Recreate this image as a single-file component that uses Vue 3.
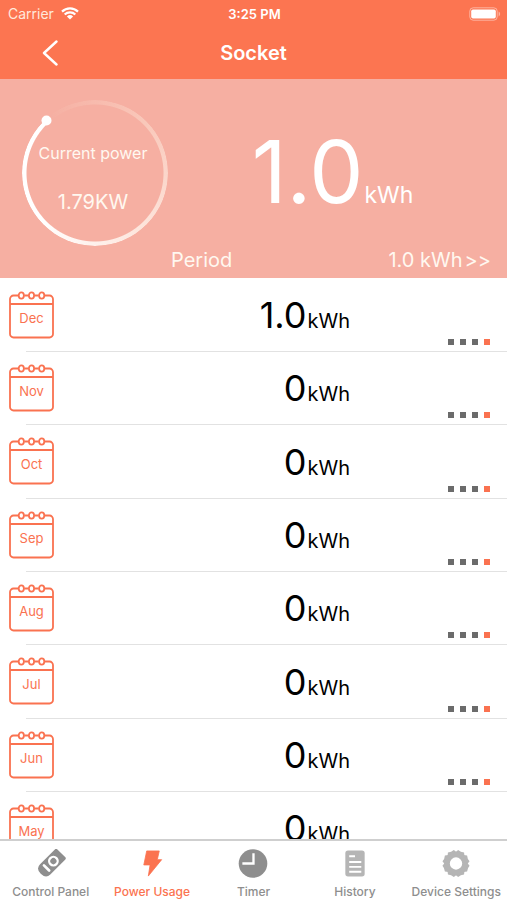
<script setup>
const months = [
  { name: 'Dec', value: '1.0' },
  { name: 'Nov', value: '0' },
  { name: 'Oct', value: '0' },
  { name: 'Sep', value: '0' },
  { name: 'Aug', value: '0' },
  { name: 'Jul', value: '0' },
  { name: 'Jun', value: '0' },
  { name: 'May', value: '0' },
]

const tabs = [
  { id: 'panel', label: 'Control Panel' },
  { id: 'usage', label: 'Power Usage' },
  { id: 'timer', label: 'Timer' },
  { id: 'history', label: 'History' },
  { id: 'settings', label: 'Device Settings' },
]
const active = 'usage'
</script>

<template>
  <div class="screen">
    <header class="top">
      <div class="status">
        <span class="carrier">
          Carrier
          <svg class="wifi" viewBox="0 0 18 13" aria-hidden="true">
            <path d="M1 4.6a11.5 11.5 0 0 1 16 0M3.7 7.5a7.6 7.6 0 0 1 10.6 0" fill="none" stroke="currentColor" stroke-width="2.2" />
            <path d="M9 12.6 5.9 9.5a4.5 4.5 0 0 1 6.2 0z" fill="currentColor" />
          </svg>
        </span>
        <span class="clock">3:25 PM</span>
        <span class="power">
          <svg class="battery" viewBox="0 0 32 14" aria-hidden="true">
            <rect x=".8" y=".8" width="27.4" height="12.4" rx="3.4" fill="none" stroke="#fff" stroke-opacity=".45" />
            <rect x="2.2" y="2.4" width="24.6" height="9.2" rx="1.8" fill="#fff" />
            <path d="M29.6 4.6c2 .7 2 4.1 0 4.8z" fill="#fff" fill-opacity=".45" />
          </svg>
        </span>
      </div>
      <nav class="bar">
        <button class="back" type="button" aria-label="Back">
          <svg viewBox="0 0 16 26" aria-hidden="true">
            <path d="M14.5 1.5 2 13l12.5 11.5" fill="none" stroke="currentColor" stroke-width="2.4" stroke-linecap="round" stroke-linejoin="round" />
          </svg>
        </button>
        <h1>Socket</h1>
      </nav>
    </header>

    <section class="hero">
      <div class="overview">
        <div class="gauge">
          <span class="track"></span>
          <svg class="knob" viewBox="0 0 146 146" aria-hidden="true"><circle cx="24.5" cy="20.5" r="5" fill="#fff" /></svg>
          <span class="gauge-label">Current power</span>
          <span class="gauge-value">1.79KW</span>
        </div>
        <p class="total"><span class="total-number">1.0</span><span class="total-unit">kWh</span></p>
      </div>
      <div class="period">
        <span>Period</span>
        <a href="#period">1.0 kWh<span class="more">&gt;&gt;</span></a>
      </div>
    </section>

    <ul class="months">
      <li v-for="m in months" :key="m.name" class="month">
        <span class="calendar">
          <svg viewBox="0 0 45 48" fill="none" stroke="currentColor" stroke-width="1.8" aria-hidden="true">
            <path d="M9.3 4.5H4.5A3.5 3.5 0 0 0 1 8v35a3.5 3.5 0 0 0 3.5 3.5h36A3.5 3.5 0 0 0 44 43V8a3.5 3.5 0 0 0-3.5-3.5h-4.8M15.3 4.5h4.2M25.5 4.5h4.2M1 13h43" />
            <ellipse cx="12.3" cy="4.5" rx="2.6" ry="3.2" />
            <ellipse cx="22.5" cy="4.5" rx="2.6" ry="3.2" />
            <ellipse cx="32.7" cy="4.5" rx="2.6" ry="3.2" />
          </svg>
          <span class="month-name">{{ m.name }}</span>
        </span>
        <div class="detail">
          <span class="reading"><span class="number">{{ m.value }}</span><span class="unit">kWh</span></span>
          <span class="dots"><i></i><i></i><i></i><i></i></span>
        </div>
      </li>
    </ul>

    <nav class="tabs">
      <a v-for="t in tabs" :key="t.id" :href="'#' + t.id" class="tab" :class="[t.id, { active: t.id === active }]">
        <svg v-if="t.id === 'panel'" viewBox="0 0 30 30" aria-hidden="true">
          <g transform="rotate(45 15 15)">
            <path d="M9 0h12q1.500 0 1.500 1.500V23.500q0 6.500-7.500 6.500t-7.500-6.500V1.500Q7.500 0 9 0z" fill="currentColor" />
            <circle cx="15" cy="11.500" r="4.400" fill="none" stroke="#fff" stroke-width="2.400" />
            <path d="M11.200 21.500h7.600" stroke="#fff" stroke-width="2.800" stroke-linecap="round" />
          </g>
        </svg>
        <svg v-else-if="t.id === 'usage'" viewBox="0 0 30 30" aria-hidden="true">
          <path d="M9.5 2h13l-2 9H25L11.200 28l1.800-11.500H6.500z" fill="currentColor" stroke="currentColor" stroke-width=".8" stroke-linejoin="round" />
        </svg>
        <svg v-else-if="t.id === 'timer'" viewBox="0 0 30 30" aria-hidden="true">
          <circle cx="15" cy="15" r="14.8" fill="currentColor" />
          <path d="M15.5 4.500V15H4" fill="none" stroke="#fff" stroke-width="2.400" />
        </svg>
        <svg v-else-if="t.id === 'history'" viewBox="0 0 30 30" aria-hidden="true">
          <rect x="5" y="1.5" width="20" height="27" rx="2.8" fill="currentColor" />
          <path d="M9 7.500h6M9 13.500h12.500M9 18.500h12.500M9 23.500h12.500" stroke="#fff" stroke-width="2" />
        </svg>
        <svg v-else viewBox="0 0 30 30" aria-hidden="true">
          <g fill="currentColor">
            <path v-for="n in 8" :key="n" d="M9 6 11.700 1.200q3.300 1.200 6.600 0L21 6z" :transform="`rotate(${n * 45 + 22.5} 15 15)`" />
          </g>
          <circle cx="15" cy="15" r="8.800" fill="none" stroke="currentColor" stroke-width="4.800" />
        </svg>
        <span>{{ t.label }}</span>
      </a>
    </nav>
  </div>
</template>

<style>
body {
  margin: 0;
  background: #fff;
}
</style>

<style scoped>
.screen {
  display: flex;
  flex-direction: column;
  height: 100vh;
  overflow: hidden;
  background: #fff;
  color: #000;
  font-family: Inter, "Liberation Sans", sans-serif;
}

a {
  color: inherit;
  text-decoration: none;
}

.top {
  flex: none;
  background: #fc7551;
  color: #fff;
}

.status {
  display: grid;
  grid-template-columns: 1fr auto 1fr;
  align-items: center;
  height: 27px;
  padding: 0 6px 0 8px;
  font-size: 13px;
}

.carrier {
  display: flex;
  align-items: center;
  gap: 7px;
  font-size: 14px;
  color: #ffe9dc;
}

.wifi {
  width: 18px;
  height: 13px;
  color: #fff;
}

.clock {
  font-weight: 600;
}

.power {
  display: flex;
  justify-content: flex-end;
}

.battery {
  width: 32px;
  height: 14px;
}

.bar {
  display: grid;
  grid-template-columns: 1fr auto 1fr;
  align-items: center;
  height: 52px;
  padding: 0 24px;
  box-sizing: border-box;
}

.back {
  display: flex;
  justify-self: start;
  padding: 8px 18px;
  border: 0;
  background: none;
  color: #fff;
}

.back svg {
  width: 16px;
  height: 26px;
}

h1 {
  margin: 0;
  font-size: 20px;
  line-height: 28px;
  font-weight: 600;
}

.hero {
  flex: none;
  padding-top: 21px;
  background: #f6afa2;
  color: #fff8f0;
}

.overview {
  display: flex;
  padding-left: 22px;
}

.gauge {
  position: relative;
  display: flex;
  flex-direction: column;
  align-items: center;
  gap: 25px;
  box-sizing: border-box;
  width: 146px;
  height: 146px;
  padding: 41px 4px 0 0;
  line-height: 24px;
}

.track {
  position: absolute;
  inset: 0;
  border-radius: 50%;
  background: conic-gradient(from 318deg, rgba(255, 240, 225, 0), rgba(255, 240, 225, 0.4) 25%, rgba(255, 246, 238, 0.75) 50%, #fff 75%);
  mask: radial-gradient(closest-side, transparent 68px, #000 69px);
}

.knob {
  position: absolute;
  inset: 0;
}

.gauge-label {
  font-size: 16px;
  white-space: nowrap;
}

.gauge-value {
  font-size: 20px;
}

.total {
  flex: 1;
  display: flex;
  justify-content: center;
  align-items: baseline;
  gap: 1px;
  margin: 0;
  padding: 20px 10px 0 0;
  color: #fff;
}

.total-number {
  font-size: 86px;
  line-height: 104px;
}

.total-unit {
  font-size: 23px;
  line-height: 28px;
}

.period {
  display: flex;
  justify-content: space-between;
  padding: 0 16px 4px 171px;
  font-size: 20px;
  line-height: 28px;
}

.more {
  margin-left: 2px;
}

.months {
  flex: 1;
  min-height: 0;
  display: grid;
  grid-auto-rows: 73px 73px 74px;
  margin: 0;
  padding: 1px 0 0;
  list-style: none;
  overflow-y: auto;
  scrollbar-width: none;
}

.month {
  display: grid;
  grid-template-columns: 26px 1fr;
}

.calendar {
  grid-area: 1 / 1;
  display: grid;
  width: 45px;
  height: 48px;
  margin: 12px 0 0 9px;
  color: #fa7250;
}

.calendar svg {
  grid-area: 1 / 1;
  width: 45px;
  height: 48px;
}

.month-name {
  grid-area: 1 / 1;
  padding-top: 18px;
  font-size: 13px;
  line-height: 18px;
  text-align: center;
}

.detail {
  grid-area: 1 / 2;
  display: flex;
  align-items: flex-end;
  justify-content: flex-end;
  gap: 98px;
  padding: 0 17px 6px 0;
  border-bottom: 1px solid #e2e2e2;
}

.reading {
  display: flex;
  align-items: baseline;
  gap: 1px;
  line-height: 44px;
}

.number {
  font-size: 36px;
}

.unit {
  font-size: 20px;
  line-height: 24px;
}

.reading {
  padding-bottom: 8px;
}

.dots {
  display: flex;
  gap: 6px;
}

.dots i {
  width: 6px;
  height: 6px;
  background: #6b6b6b;
}

.dots i:last-child {
  background: #fa7250;
}

.tabs {
  flex: none;
  display: grid;
  grid-template-columns: repeat(5, 1fr);
  border-top: 2px solid #cfcfcf;
  background: #fff;
}

.tab {
  display: flex;
  flex-direction: column;
  align-items: center;
  gap: 6px;
  height: 59px;
  padding-top: 8px;
  box-sizing: border-box;
  color: #8e8e8e;
  font-size: 12px;
  line-height: 16px;
  font-weight: 500;
  white-space: nowrap;
}

.tab svg {
  width: 30px;
  height: 30px;
}

.history svg,
.settings svg {
  color: #b5b5b5;
}

.tab.active {
  color: #fb7350;
}
</style>
